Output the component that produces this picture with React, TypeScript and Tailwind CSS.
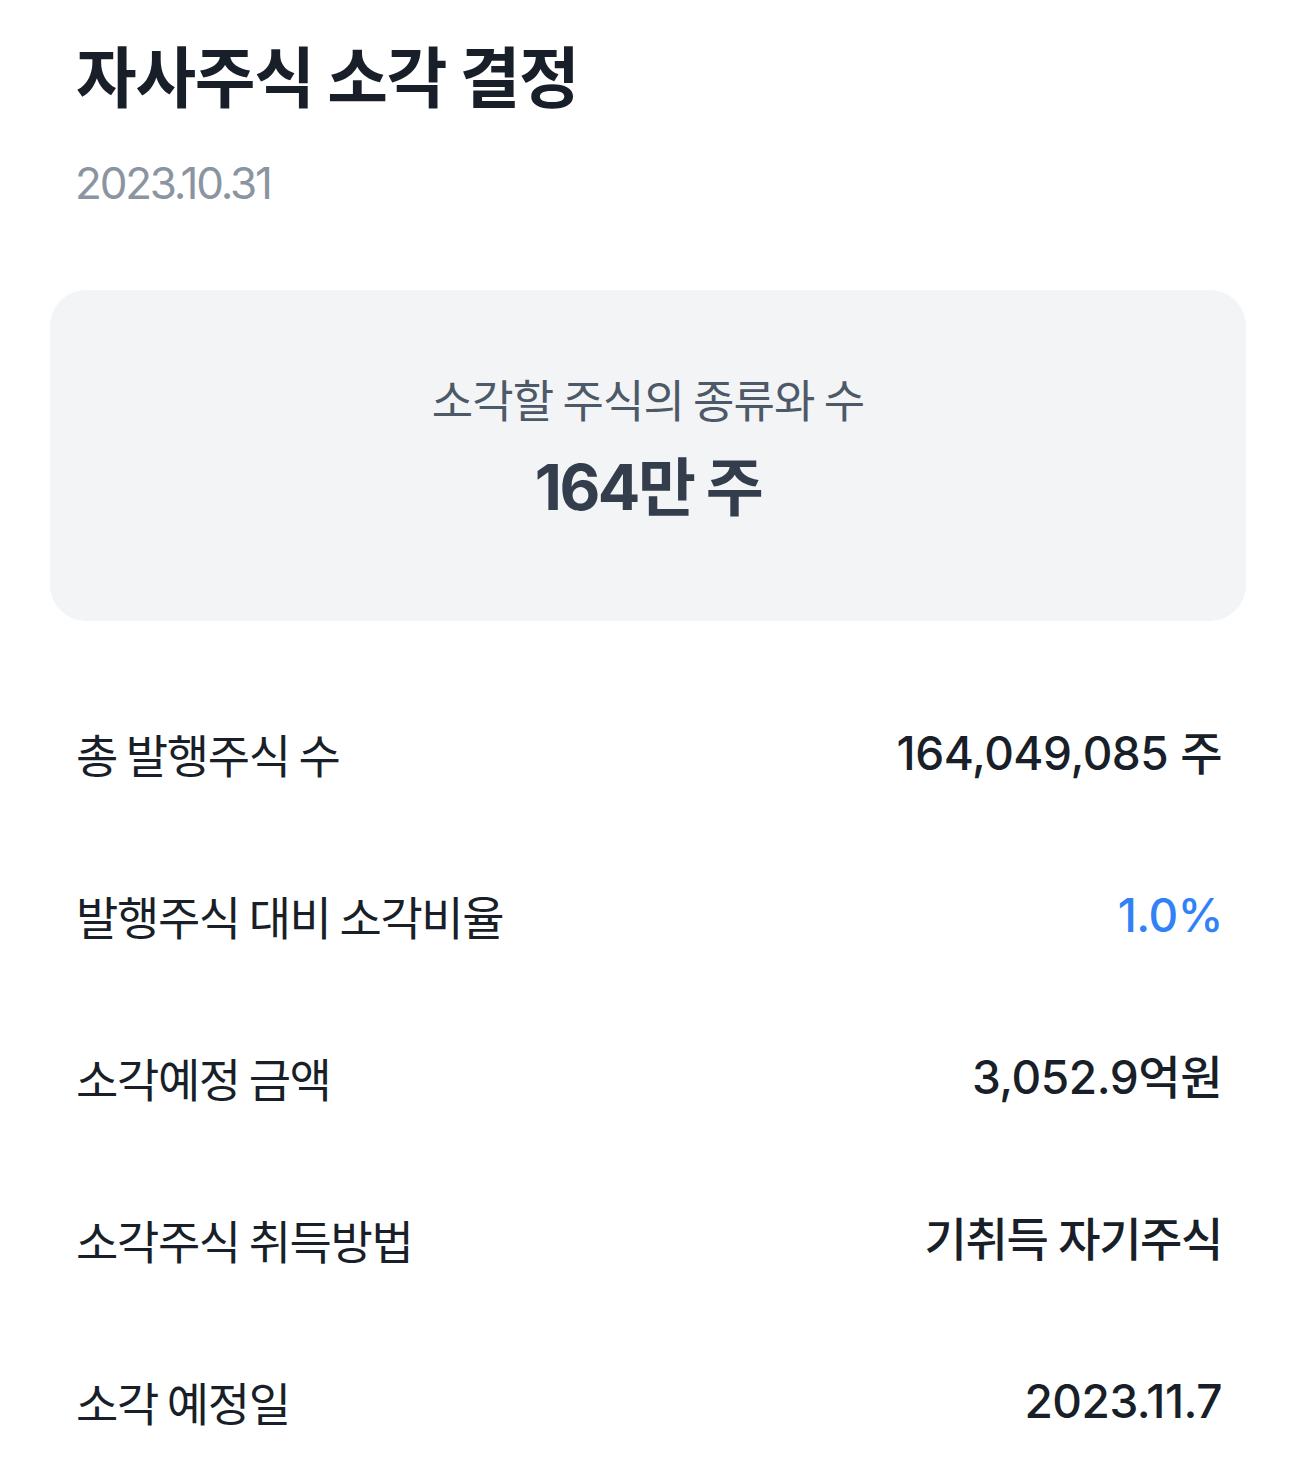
const rows: { label: string; value: string; accent?: boolean; hangul?: boolean }[] = [
  { label: "총 발행주식 수", value: "164,049,085 주" },
  { label: "발행주식 대비 소각비율", value: "1.0%", accent: true },
  { label: "소각예정 금액", value: "3,052.9억원" },
  { label: "소각주식 취득방법", value: "기취득 자기주식", hangul: true },
  { label: "소각 예정일", value: "2023.11.7" },
];

// Latin digits come from Inter, Hangul falls through to Noto Sans CJK KR.
const numFont = { fontFamily: 'Inter, "Noto Sans CJK KR", sans-serif' };

function valueClass(accent?: boolean, hangul?: boolean) {
  if (accent) return "-mr-[3px] text-[46px] leading-[54px] font-medium tracking-[-0.01em] text-[#3182f6]";
  if (hangul) return "-mr-[2px] text-[46px] leading-[54px] font-medium tracking-[-0.03em] text-[#191f28]";
  return "-mr-[2px] text-[46px] leading-[54px] font-medium tracking-[-0.01em] text-[#191f28]";
}

export default function App() {
  return (
    <div
      className="w-[1296px] min-h-[1464px] bg-white"
      style={{ fontFamily: '"Noto Sans CJK KR", "Noto Sans", sans-serif' }}
    >
      <div className="px-[50px] pt-[32px]">
        <h1 className="px-[26px] text-[66px] leading-[82px] font-bold tracking-[-0.02em] text-[#191f28]">
          자사주식 소각 결정
        </h1>
        <p
          className="px-[25px] mt-[43px] text-[44px] leading-[52px] tracking-[-0.05em] text-[#8b95a1]"
          style={numFont}
        >
          2023.10.31
        </p>

        <div className="mt-[81px] h-[331px] rounded-[36px] bg-[#f2f4f6] flex flex-col items-center pt-[82px]">
          <p className="text-[45px] leading-[54px] tracking-[-0.02em] text-[#4e5968]">
            소각할 주식의 종류와 수
          </p>
          <p
            className="mt-[28px] text-[63px] leading-[66px] font-bold tracking-[-0.04em] text-[#333d4b]"
            style={numFont}
          >
            164만 주
          </p>
        </div>

        <div className="mt-[105px] px-[26px] flex flex-col gap-[108px]">
          {rows.map((r) => (
            <div key={r.label} className="flex items-center justify-between h-[54px]">
              <span className="text-[46px] leading-[54px] tracking-[-0.03em] text-[#191f28]">
                {r.label}
              </span>
              <span className={valueClass(r.accent, r.hangul)} style={numFont}>
                {r.value}
              </span>
            </div>
          ))}
        </div>
      </div>
    </div>
  );
}
